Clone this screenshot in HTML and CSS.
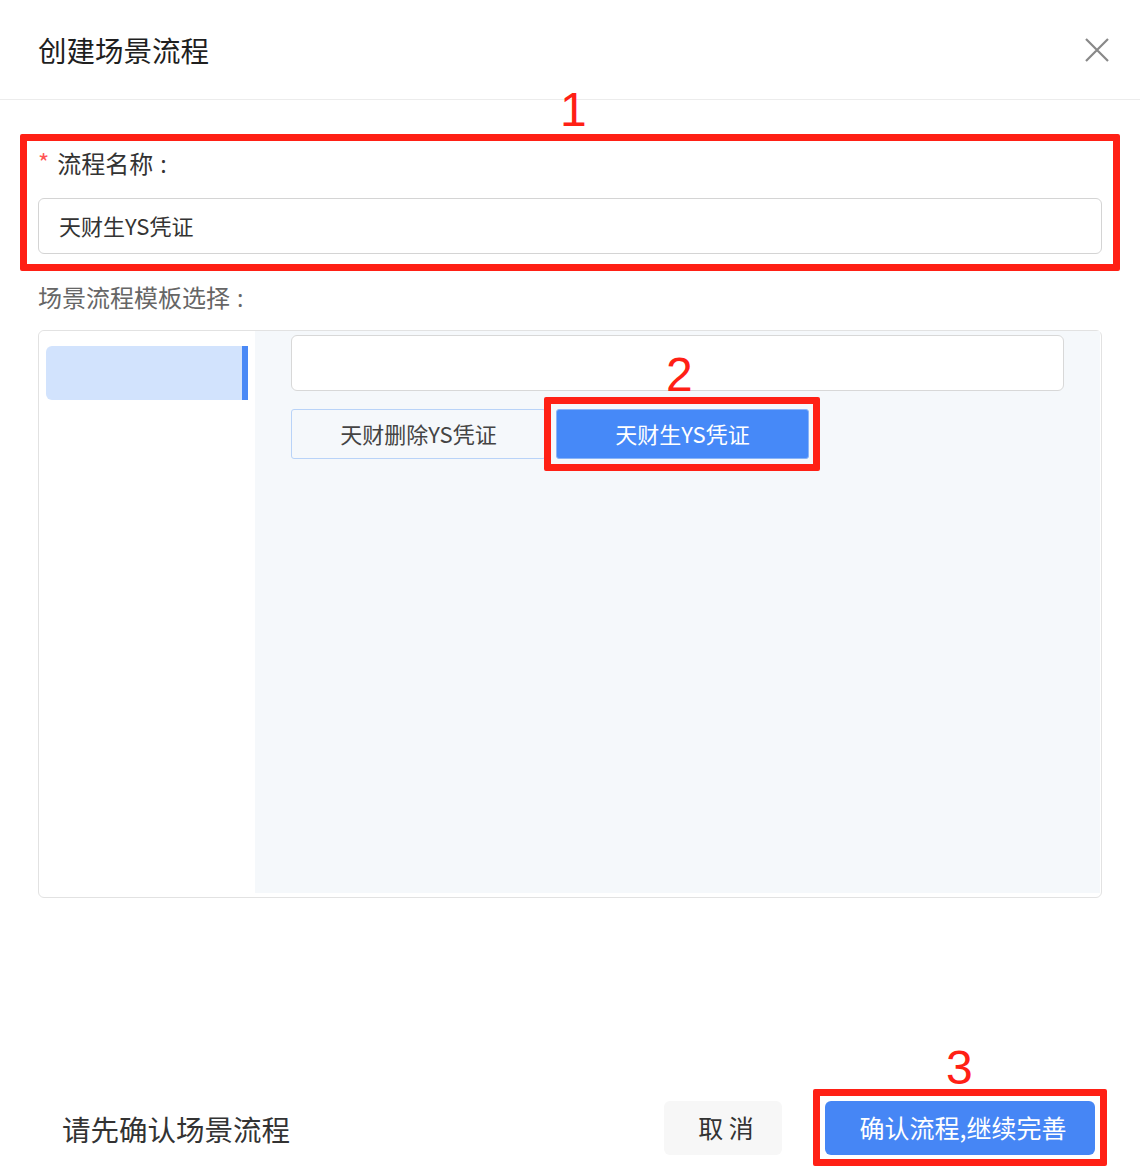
FILE: index.html
```html
<!DOCTYPE html>
<html lang="zh">
<head>
<meta charset="utf-8">
<link rel="stylesheet" href="styles.css">
</head>
<body>
<div class="modal">
  <div class="modal-header">
    <div class="title">创建场景流程</div>
    <svg class="close" width="24" height="24" viewBox="0 0 24 24"><path d="M1 1L23 23M23 1L1 23" stroke="#888" stroke-width="2.2" fill="none"/></svg>
  </div>
  <div class="modal-body">
    <div class="label"><span class="req">*</span>流程名称<span class="colon">:</span></div>
    <div class="input">天财生YS凭证</div>
    <div class="label muted">场景流程模板选择<span class="colon">:</span></div>
    <div class="panel">
      <div class="side">
        <div class="side-item"></div>
      </div>
      <div class="main">
        <div class="search"></div>
        <div class="tags">
          <div class="tag">天财删除YS凭证</div>
          <div class="tag active">天财生YS凭证</div>
        </div>
      </div>
    </div>
  </div>
  <div class="modal-footer">
    <div class="hint">请先确认场景流程</div>
    <div class="btns">
      <div class="btn cancel">取 消</div>
      <div class="btn primary">确认流程,继续完善</div>
    </div>
  </div>

  <div class="mark box1"></div>
  <div class="mark box2"></div>
  <div class="mark box3"></div>
  <div class="num n1">1</div>
  <div class="num n2">2</div>
  <div class="num n3">3</div>
</div>
</body>
</html>
```

FILE: styles.css
```css
* { box-sizing: border-box; }
html, body { margin: 0; padding: 0; background: #fff; }
body { font-family: "Noto Sans CJK SC", "Noto Sans", sans-serif; color: #333; }
.modal { position: relative; width: 1140px; height: 1176px; background: #fff; display: flex; flex-direction: column; }
.modal-header { height: 100px; border-bottom: 1px solid #ececec; display: flex; align-items: center; justify-content: space-between; padding: 0 31px 0 38px; }
.title { font-size: 28.5px; font-weight: 400; color: #1f1f1f; line-height: 40px; }
.close { display: block; }
.modal-body { padding: 0 38px; }
.label { font-size: 24px; line-height: 32px; margin-top: 47px; color: #333; }
.label .req { color: #f55; font-size: 24px; margin-right: 8px; position: relative; top: -1px; }
.label .colon { margin-left: 7px; font-family: "Noto Sans", sans-serif; }
.label.muted { color: #666; margin-top: 27px; }
.input { margin-top: 18px; height: 56px; border: 1px solid #d4d4d4; border-radius: 6px; font-size: 22px; line-height: 52px; padding-left: 20px; color: #333; }
.panel { margin-top: 16px; height: 568px; border: 1px solid #e2e2e2; border-radius: 6px; display: flex; padding-bottom: 4px; }
.side { width: 216px; background: #fff; padding: 15px 7px 0 7px; border-radius: 6px 0 0 6px; }
.side-item { height: 54px; background: #d2e3fd; border-right: 6px solid #4a89f6; border-radius: 6px 0 0 6px; }
.main { flex: 1; background: #f5f8fb; padding: 4px 36px 0 36px; margin-right: 1px; }
.search { height: 56px; background: #fff; border: 1px solid #d8d8d8; border-radius: 6px; }
.tags { display: flex; margin-top: 18px; gap: 10px; }
.tag { width: 255px; height: 50px; border: 1px solid #b9d3f8; border-radius: 3px; font-size: 22px; line-height: 46px; text-align: center; color: #444; background: #f5f8fb; }
.tag.active { width: 253px; background: #4689f8; color: #fff; border-color: #8ab4f8; }
.modal-footer { margin-top: auto; height: 96px; display: flex; align-items: center; justify-content: space-between; padding: 0 45px 0 62px; }
.hint { font-size: 28.5px; color: #333; }
.btns { display: flex; gap: 43px; }
.btn { height: 54px; border-radius: 6px; font-size: 25px; line-height: 52px; text-align: center; }
.cancel { width: 118px; background: #f7f7f7; color: #333; padding-left: 6px; }
.primary { width: 270px; background: #4686f5; color: #fff; padding-left: 6px; }
.mark { position: absolute; border: 7px solid #ff2015; border-radius: 2px; }
.box1 { left: 20px; top: 134px; width: 1100px; height: 137px; }
.box2 { left: 544px; top: 397px; width: 276px; height: 74px; }
.box3 { left: 813px; top: 1089px; width: 294px; height: 77px; }
.num { position: absolute; color: #ff2015; font-family: "Liberation Sans", sans-serif; font-size: 48px; line-height: 48px; }
.n1 { left: 560px; top: 86px; }
.n2 { left: 666px; top: 351px; }
.n3 { left: 946px; top: 1044px; }
```
